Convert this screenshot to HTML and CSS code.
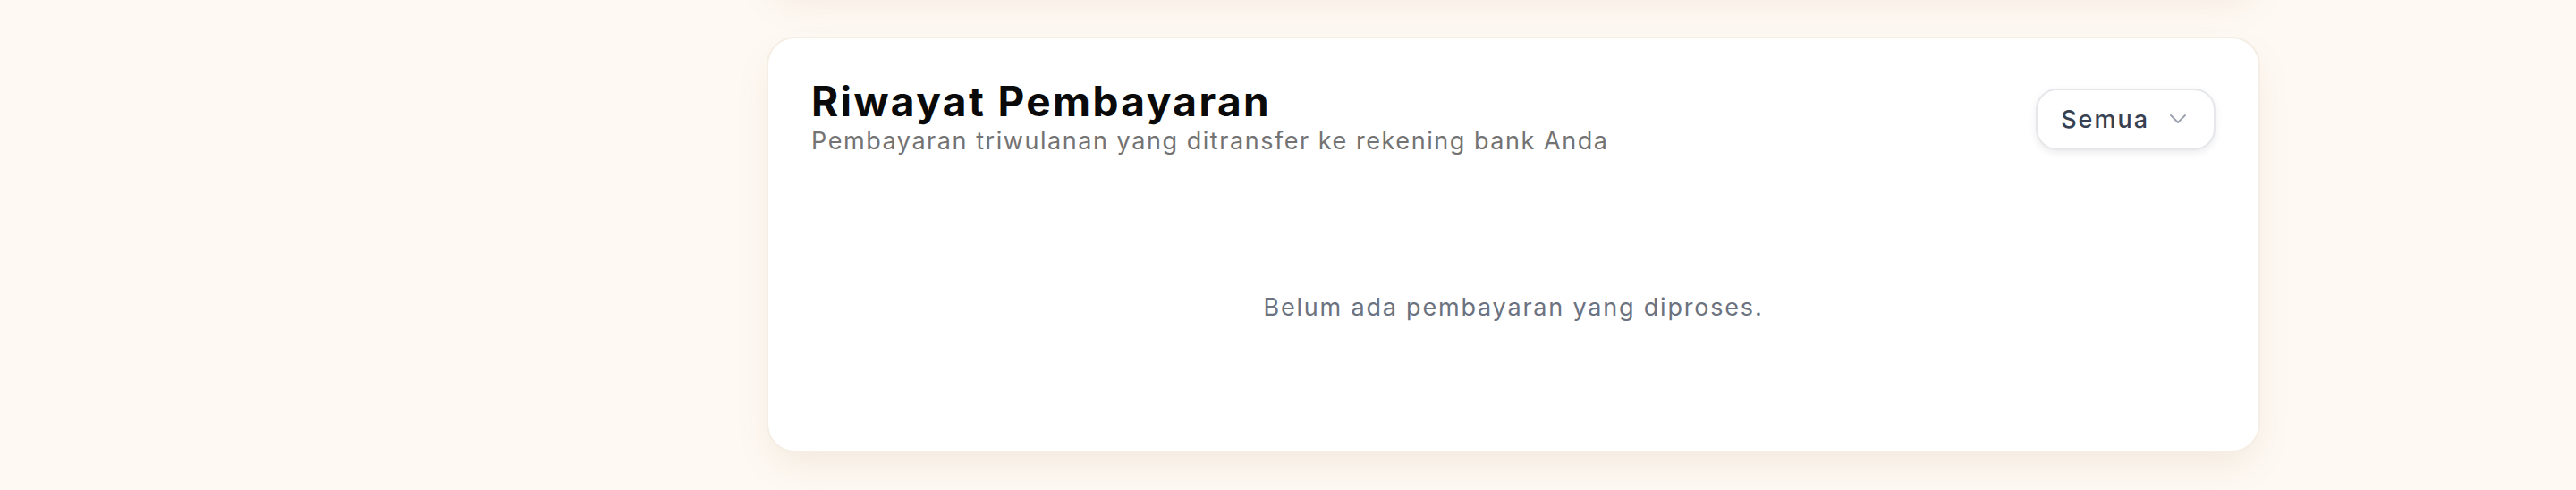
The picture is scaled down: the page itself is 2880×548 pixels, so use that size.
FILE: index.html
```html
<!DOCTYPE html>
<html lang="id">
<head>
<meta charset="utf-8">
<title>Riwayat Pembayaran</title>
<link rel="stylesheet" href="styles.css">
</head>
<body>
<div class="page">
  <div class="sidebar-space"></div>
  <main class="main">
    <div class="prev-card"></div>
    <section class="card">
      <header class="card-header">
        <div class="heading">
          <h2 class="title">Riwayat Pembayaran</h2>
          <p class="subtitle">Pembayaran triwulanan yang ditransfer ke rekening bank Anda</p>
        </div>
        <button class="select" type="button">
          <span class="select-label">Semua</span>
          <svg class="chevron" width="32" height="32" viewBox="0 0 24 24" fill="none" stroke="currentColor" stroke-width="1.5" stroke-linecap="round" stroke-linejoin="round"><path d="m6 9 6 6 6-6"/></svg>
        </button>
      </header>
      <div class="empty">
        <p class="empty-text">Belum ada pembayaran yang diproses.</p>
      </div>
    </section>
  </main>
</div>
</body>
</html>
```

FILE: styles.css
```css
* { box-sizing: border-box; }
html, body { margin: 0; padding: 0; }
body {
  background: #fef9f3;
  font-family: Inter, "Liberation Sans", sans-serif;
  height: 548px;
  overflow: hidden;
}
.page {
  display: grid;
  grid-template-columns: 857px 1670px;
}
.main {
  display: flex;
  flex-direction: column;
  gap: 48px;
}
.prev-card {
  height: 100px;
  margin-top: -107px;
  background: #fff;
  border: 2px solid #f5eee4;
  border-radius: 32px;
  box-shadow: 0 16px 40px -6px rgba(160, 120, 70, 0.11);
}
.card {
  height: 465px;
  background: #fff;
  border: 2px solid #f5eee4;
  border-radius: 32px;
  padding: 45px 48px 0 48px;
  box-shadow: 0 18px 40px -6px rgba(160, 120, 70, 0.12);
}
.card-header {
  display: flex;
  justify-content: space-between;
  align-items: center;
}
.heading { display: flex; flex-direction: column; }
.title {
  margin: 0;
  font-size: 46px;
  line-height: 50px;
  font-weight: 700;
  color: #0a0a0a;
  letter-spacing: 2.4px;
}
.subtitle {
  margin: 0;
  font-size: 27px;
  line-height: 40px;
  font-weight: 400;
  color: #737373;
  letter-spacing: 1.55px;
}
.select {
  display: flex;
  align-items: center;
  gap: 16px;
  height: 69px;
  padding: 0 24px 0 26px;
  background: #fff;
  border: 2px solid #e5e7eb;
  border-radius: 24px;
  box-shadow: 0 3px 8px rgba(0, 0, 0, 0.08);
  font-family: inherit;
  cursor: pointer;
}
.select-label {
  font-size: 27px;
  font-weight: 500;
  color: #374151;
  letter-spacing: 2px;
}
.chevron { color: #9ca3af; display: block; }
.empty {
  padding-top: 146px;
  text-align: center;
}
.empty-text {
  margin: 0;
  font-size: 27px;
  line-height: 40px;
  color: #6b7280;
  letter-spacing: 1.8px;
}
```
